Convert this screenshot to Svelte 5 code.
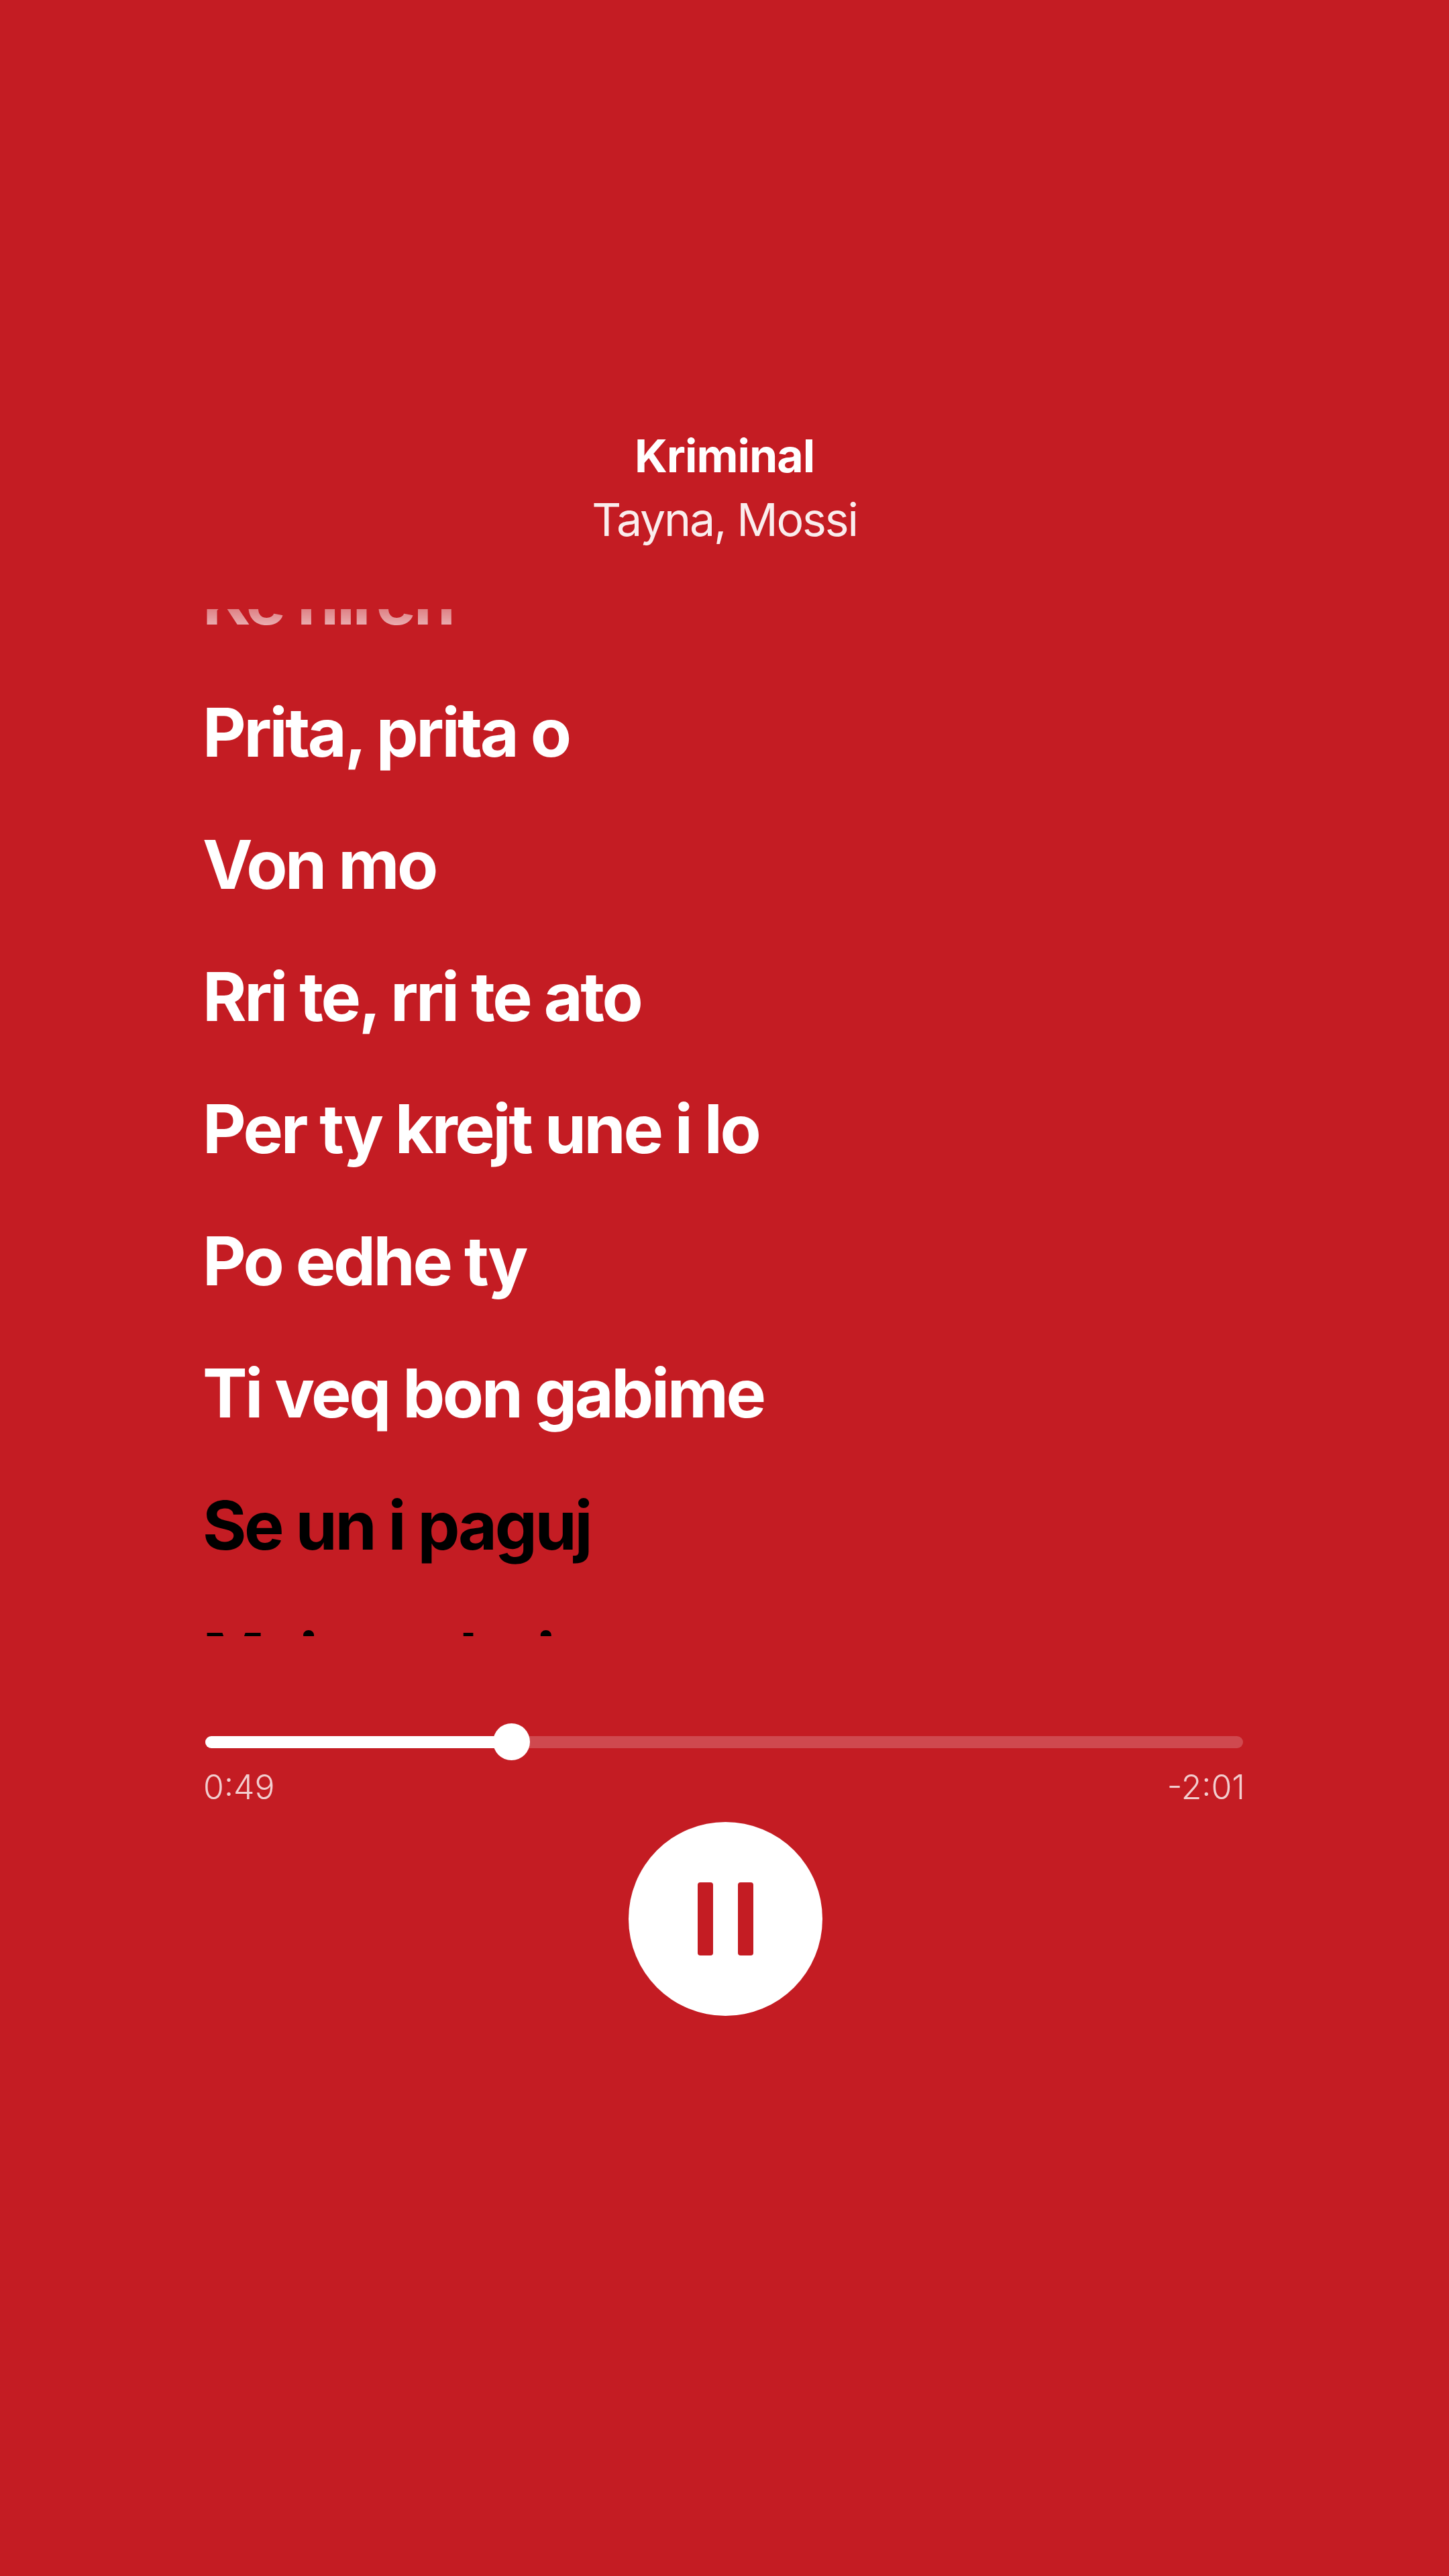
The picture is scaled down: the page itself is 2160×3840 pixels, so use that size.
<script>
	const lyrics = [
		{ text: 'Ke hiren', state: 'sung' },
		{ text: 'Prita, prita o', state: 'sung' },
		{ text: 'Von mo', state: 'sung' },
		{ text: 'Rri te, rri te ato', state: 'sung' },
		{ text: 'Per ty krejt une i lo', state: 'sung' },
		{ text: 'Po edhe ty', state: 'sung' },
		{ text: 'Ti veq bon gabime', state: 'sung' },
		{ text: 'Se un i paguj', state: 'next' },
		{ text: 'Mai une bei', state: 'next' }
	];

	let progress = 0.2955;
</script>

<main class="player">
	<header class="track">
		<div class="title">Kriminal</div>
		<div class="artist">Tayna, Mossi</div>
	</header>

	<section class="lyrics">
		<div class="lines">
			{#each lyrics as line}
				<p class="line" class:next={line.state === 'next'}>{line.text}</p>
			{/each}
		</div>
	</section>

	<section class="controls">
		<div class="track-bar">
			<div class="fill" style="width: {progress * 100}%">
				<span class="knob"></span>
			</div>
		</div>
		<div class="times">
			<span>0:49</span>
			<span>-2:01</span>
		</div>
		<button class="pause" aria-label="Pause">
			<span class="bar"></span>
			<span class="bar"></span>
		</button>
	</section>
</main>

<style>
	:global(body) {
		margin: 0;
		background: #c41c23;
	}

	.player {
		width: 2160px;
		height: 3840px;
		background: #c41c23;
		color: #fff;
		font-family: Inter, "Liberation Sans", sans-serif;
		overflow: hidden;
		display: flex;
		flex-direction: column;
	}

	.track {
		padding-top: 638px;
		text-align: center;
	}

	.title {
		font-size: 68px;
		line-height: 82px;
		font-weight: 700;
		letter-spacing: -1px;
	}

	.artist {
		font-size: 68px;
		line-height: 108px;
		font-weight: 400;
		letter-spacing: -2.2px;
		opacity: 0.92;
	}

	.lyrics {
		margin-top: 80px;
		height: 1531px;
		padding-left: 302px;
		overflow: hidden;
		-webkit-mask-image: linear-gradient(to bottom, rgba(0, 0, 0, 0.45) 0, #000 70px);
		mask-image: linear-gradient(to bottom, rgba(0, 0, 0, 0.45) 0, #000 70px);
	}

	.lines {
		margin-top: -73px;
		display: flex;
		flex-direction: column;
		gap: 77px;
	}

	.line {
		margin: 0;
		font-size: 100px;
		line-height: 120px;
		font-weight: 700;
		letter-spacing: -3.4px;
		white-space: nowrap;
	}

	.line.next {
		color: #000;
	}

	.controls {
		margin-top: 149px;
		padding: 0 307px 0 306px;
		display: flex;
		flex-direction: column;
	}

	.track-bar {
		height: 18px;
		border-radius: 9px;
		background: rgba(255, 255, 255, 0.2);
	}

	.fill {
		position: relative;
		height: 100%;
		border-radius: 9px;
		background: #fff;
	}

	.knob {
		position: absolute;
		right: -27px;
		top: -19px;
		width: 55px;
		height: 55px;
		border-radius: 50%;
		background: #fff;
	}

	.times {
		margin: 28px -3px 0;
		display: flex;
		justify-content: space-between;
		font-size: 50px;
		line-height: 60px;
		font-weight: 300;
		color: rgba(255, 255, 255, 0.78);
	}

	.pause {
		align-self: center;
		margin: 22px 0 0 3px;
		width: 289px;
		height: 289px;
		padding: 0;
		border: none;
		border-radius: 50%;
		background: #fff;
		display: flex;
		align-items: center;
		justify-content: center;
		gap: 37px;
	}

	.bar {
		width: 23px;
		height: 109px;
		border-radius: 4px;
		background: #c41c23;
	}
</style>
